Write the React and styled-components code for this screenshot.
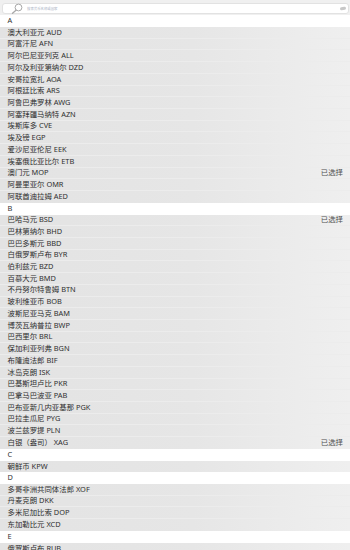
import React from "react";
import styled, { createGlobalStyle } from "styled-components";

const GlobalStyle = createGlobalStyle`
  html, body { margin: 0; padding: 0; }
  body {
    background: #e6e6e6;
    font-family: "Noto Sans", "Noto Sans CJK SC", sans-serif;
    overflow: hidden;
  }
`;

const ROW_H = 11.72;

const Page = styled.div`
  width: 350px;
  height: 550px;
  overflow: hidden;
  display: flex;
  flex-direction: column;
`;

const SearchBar = styled.div`
  height: 15.3px;
  flex: none;
  box-sizing: border-box;
  padding: 2.5px 1px 1px 2px;
  background: #f0f0f0;
  display: flex;
`;

const SearchInput = styled.div`
  flex: 1;
  display: flex;
  align-items: center;
  gap: 4px;
  background: #ffffff;
  border: 1px solid #e2e2e2;
  border-radius: 3px;
  padding: 0 4px 0 8px;
  box-sizing: border-box;
  position: relative;
`;

const Placeholder = styled.span`
  font-size: 3.4px;
  line-height: 1;
  color: #aab2c4;
`;

const ClearMark = styled.span`
  position: absolute;
  right: 2px;
  top: 3.5px;
  width: 6px;
  height: 3px;
  border-radius: 2px;
  background: #c8c8c8;
  transform: rotate(-10deg);
`;

const Section = styled.div`
  display: flex;
  flex-direction: column;
  flex: none;
`;

const Header = styled.div`
  height: ${ROW_H}px;
  line-height: ${ROW_H}px;
  background: #ffffff;
  color: #303030;
  font-size: 7.4px;
  padding-left: 7.5px;
`;

const Row = styled.div`
  height: ${ROW_H}px;
  display: flex;
  align-items: center;
  justify-content: space-between;
  box-sizing: border-box;
  padding: 0 7px 0 7.5px;
  font-size: 7.4px;
  line-height: 1;
  color: #2e2e2e;
  background: linear-gradient(to right, #e3e3e3 0%, #e6e6e6 55%, #efefef 100%);
  border-bottom: ${(p) => (p.$last ? "none" : "0.5px solid #ececec")};
  white-space: nowrap;
`;

const Selected = styled.span`
  font-size: 7.4px;
  color: #505050;
`;

const SearchIcon = () => (
  <svg width="12" height="11" viewBox="0 0 12 11" fill="none">
    <circle cx="7.5" cy="4.5" r="3.4" stroke="#a9a9a9" strokeWidth="1" />
    <path d="M5 7.2 L1.5 10.3" stroke="#a9a9a9" strokeWidth="1.3" strokeLinecap="round" />
  </svg>
);

const data = [
  {
    letter: "A",
    items: [
      ["澳大利亚元 AUD"],
      ["阿富汗尼 AFN"],
      ["阿尔巴尼亚列克 ALL"],
      ["阿尔及利亚第纳尔 DZD"],
      ["安哥拉宽扎 AOA"],
      ["阿根廷比索 ARS"],
      ["阿鲁巴弗罗林 AWG"],
      ["阿塞拜疆马纳特 AZN"],
      ["埃斯库多 CVE"],
      ["埃及镑 EGP"],
      ["爱沙尼亚伦尼 EEK"],
      ["埃塞俄比亚比尔 ETB"],
      ["澳门元 MOP", true],
      ["阿曼里亚尔 OMR"],
      ["阿联酋迪拉姆 AED"],
    ],
  },
  {
    letter: "B",
    items: [
      ["巴哈马元 BSD", true],
      ["巴林第纳尔 BHD"],
      ["巴巴多斯元 BBD"],
      ["白俄罗斯卢布 BYR"],
      ["伯利兹元 BZD"],
      ["百慕大元 BMD"],
      ["不丹努尔特鲁姆 BTN"],
      ["玻利维亚币 BOB"],
      ["波斯尼亚马克 BAM"],
      ["博茨瓦纳普拉 BWP"],
      ["巴西里尔 BRL"],
      ["保加利亚列弗 BGN"],
      ["布隆迪法郎 BIF"],
      ["冰岛克朗 ISK"],
      ["巴基斯坦卢比 PKR"],
      ["巴拿马巴波亚 PAB"],
      ["巴布亚新几内亚基那 PGK"],
      ["巴拉圭瓜尼 PYG"],
      ["波兰兹罗提 PLN"],
      ["白银（盎司） XAG", true],
    ],
  },
  { letter: "C", items: [["朝鲜币 KPW"]] },
  {
    letter: "D",
    items: [
      ["多哥非洲共同体法郎 XOF"],
      ["丹麦克朗 DKK"],
      ["多米尼加比索 DOP"],
      ["东加勒比元 XCD"],
    ],
  },
  { letter: "E", items: [["俄罗斯卢布 RUB"]] },
];

export default function App() {
  return (
    <Page>
      <GlobalStyle />
      <SearchBar>
        <SearchInput>
          <SearchIcon />
          <Placeholder>搜索货币名称或国家</Placeholder>
          <ClearMark />
        </SearchInput>
      </SearchBar>
      {data.map((sec) => (
        <Section key={sec.letter}>
          <Header>{sec.letter}</Header>
          {sec.items.map(([name, sel], i) => (
            <Row key={name} $last={i === sec.items.length - 1}>
              <span>{name}</span>
              {sel && <Selected>已选择</Selected>}
            </Row>
          ))}
        </Section>
      ))}
    </Page>
  );
}
